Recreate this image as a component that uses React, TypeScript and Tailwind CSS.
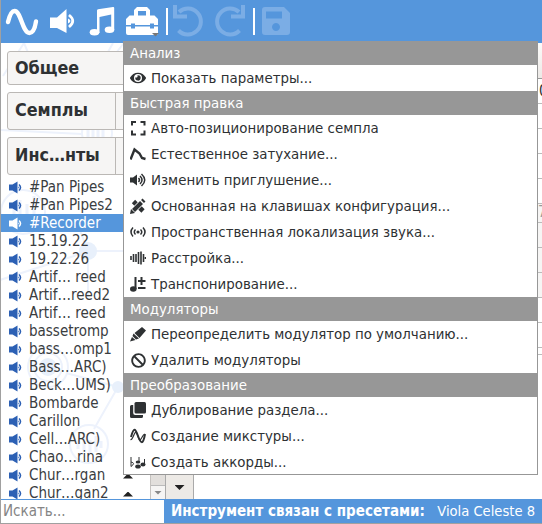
import React from "react";
import { FaBan, FaEye } from "react-icons/fa";

const ui = "font-['DejaVu_Sans_Condensed','DejaVu_Sans',sans-serif] [font-stretch:condensed]";

function Speaker({ className }: { className: string }) {
  return (
    <svg viewBox="0 0 26 26" className={className} fill="currentColor">
      <path d="M0 7h7L17 1v24L7 19H0z" />
      <path d="M18.500 10.500q3.500 2.500 0 5z" />
      <path d="M20 7q6 6 0 12" fill="none" stroke="currentColor" strokeWidth="3" />
    </svg>
  );
}

function Toolbar() {
  return (
    <header className="h-[43px] shrink-0 bg-[#5596dc]">
      <svg width="541" height="43" viewBox="1 0 541 43" fill="none" stroke="#fff">
        <path d="M8 22C10 14 12 11 14.500 11C21 11 22.500 33 29.500 33C33 33 35 28 36 21.500" strokeWidth="4.400" strokeLinecap="round" />
        <g fill="#fff" stroke="none">
          <path d="M50 17.500h7L66.500 9v24L57 28h-7z" />
          <path d="M68 18.500q5 2.500 0 5z" />
          <path d="M97 10.500q0-1 1-1.200L113 7q1.200-.2 1.200 1v22h-3V14.500L99.500 17v16h-2.500z" />
          <ellipse cx="94.500" cy="32.200" rx="4.800" ry="3.300" />
          <ellipse cx="109.500" cy="29.800" rx="4.800" ry="3.300" />
          <path fillRule="evenodd" d="M126 25v-6l3.500-3.500H134V10l3-3h10l3 3v5.500h4.500L158 19v6h-4v-1.500h-4V25h-15v-1.500h-4V25zM138 11v4.500h8V11z" />
          <path d="M126 26.500h5v2h4v-2h15v2h4v-2h4V33q0 2-2 2h-28q-2 0-2-2z" />
        </g>
        <path d="M69 15q7.500 6 0 12" strokeWidth="2.800" />
        <path d="M152 33h7l-3.500 3.500z" fill="#777" stroke="none" />
        <path d="M167 8v27M254 8v27" strokeWidth="2" />
        <g stroke="#7bade5" strokeWidth="4">
          <path d="M175 5v11.500h12M179 12a13 13 0 1 1-.5 18.500" />
          <path d="M243 5v11.500h-12M239 12a13 13 0 1 0 .5 18.500" />
        </g>
        <path fillRule="evenodd" d="M265 7h19l6 6v19q0 3-3 3h-22q-3 0-3-3V10q0-3 3-3zM266 11.500v7h16v-7zM276 23a4 4 0 1 0 .01 0z" fill="#7bade5" stroke="none" />
      </svg>
    </header>
  );
}

function Watermark() {
  return (
    <svg className="absolute left-[-1px] top-0" width="165" height="456" viewBox="0 43 165 456" fill="none" stroke="#edf2fc" strokeWidth="2">
      <path d="M24 43L3 76M24 43l16 38M113 43l-5 9M124 43l-8 10M0 130l82 4M0 280l80-26M88 251h40M74 215l14 36v46M66 373l52 14-24 42" />
      <circle cx="97" cy="133" r="15" />
      <path d="M88 127v12M93 123v20M98 123v20M103 127v12" strokeWidth="3" />
      <circle cx="23" cy="212" r="22" />
      <path d="M14 208v11M20 200v19M27 204v15M34 196v23" strokeWidth="3" />
      <circle cx="48" cy="367" r="20" />
      <circle cx="48" cy="367" r="14" />
      <circle cx="89" cy="444" r="19" />
      <path d="M78 440v9M84 436v16M90 440v13M96 436v16M101 441v7" strokeWidth="3" />
      <g fill="#e8f0fb" stroke="none">
        <circle cx="88" cy="251" r="9" />
        <circle cx="118" cy="387" r="6" />
        <circle cx="48" cy="367" r="9" />
      </g>
    </svg>
  );
}

function Section({ title, tall, split }: { title: string; tall?: boolean; split?: boolean }) {
  return (
    <div className={`${tall ? "h-[38px]" : "h-[34px]"} flex shrink-0 rounded-[3px] border border-[#bbb8b5] bg-[#f6f5f4]`}>
      <span className={`w-[108px] pl-[7px] text-[17.800px] font-bold leading-[32px] text-[#2e3133] ${tall ? "pt-px" : ""} ${split ? "border-r border-[#bbb8b5]" : ""}`}>{title}</span>
    </div>
  );
}

const instruments = ["#Pan Pipes", "#Pan Pipes2", "#Recorder", "15.19.22", "19.22.26", "Artif… reed", "Artif…reed2", "Artif… reed", "bassetromp", "bass…omp1", "Bass…ARC)", "Beck…UMS)", "Bombarde", "Carillon", "Cell…ARC)", "Chao…rina", "Chur…rgan", "Chur…gan2"];

function Sidebar() {
  return (
    <aside className="relative flex w-[149px] shrink-0 flex-col overflow-hidden">
      <Watermark />
      <div className="relative flex flex-col gap-[7px] pl-[6px] pt-[8px]">
        <Section title="Общее" />
        <Section title="Семплы" tall split />
        <Section title="Инс…нты" tall split />
      </div>
      <ul className="relative mt-[3px]">
        {instruments.map((name, i) => (
          <li key={i} className={`flex h-[18px] items-center pl-[8px] text-[15px] leading-[18px] ${i === 2 ? "bg-[#5596dc] text-white" : "text-[#3a3d3f]"}`}>
            <Speaker className={`mr-[7px] size-[13px] ${i === 2 ? "text-white" : "text-[#2c60b4]"}`} />
            <span className="-mt-px whitespace-pre">{name}</span>
            {i > 15 && <i className="absolute left-[122px] mt-[2px] h-[5px] w-[10px] bg-[#222] [clip-path:polygon(50%_0,100%_100%,0_100%)]" />}
          </li>
        ))}
      </ul>
    </aside>
  );
}

const icons: Record<string, React.ReactNode> = {
  frame: <path d="M2 5.500V2h4M10.500 2h4v3.500M14.500 10.500v4h-4M6 14.500H2v-4" fill="none" strokeWidth="2" />,
  decay: <path d="M.5 13.500L4.500 3.500l5 4 2.500 4.500 3.500 1" fill="none" strokeWidth="2.400" />,
  volume: <><path d="M0 5.500h3L7 2.500v11L3 10.500H0z" stroke="none" /><path d="M8.500 6q2 2 0 4M10 4q4 4 0 8M11.500 2q6.500 6 0 12" fill="none" strokeWidth="1.500" /></>,
  tools: <><path d="M3.500 3.500l9.500 9.500" strokeWidth="4.600" /><path d="M2 14L14 2" stroke="#fff" strokeWidth="5.600" /><path d="M3.500 12.500l8-8M12.500 3.500l1.500-1.500" strokeWidth="4.200" /><path d="M0 16l1-5 4 4z" stroke="none" /></>,
  spatial: <><circle cx="8" cy="8" r="1.600" stroke="none" /><path d="M5.500 5.500q-2.500 2.500 0 5M3 3.500q-4 4.500 0 9M10.500 5.500q2.500 2.500 0 5M13 3.500q4 4.500 0 9" fill="none" strokeWidth="1.500" /></>,
  detune: <path d="M1 6v4M3.500 4v8M6 4v8M8.500 2v12M11 1.500v13M13.500 4v8M15.500 7v2" strokeWidth="1.600" />,
  transpose: <><path d="M5.500 1v12M11.500 1v8M8 5h7.500M8 12h7.500" fill="none" strokeWidth="2" /><ellipse cx="3.300" cy="13" rx="3.300" ry="2.700" stroke="none" /></>,
  marker: <path d="M12 1l4 3.500L9.500 12 4.500 7zM3.500 7.500L9 12.500l-3 1-3.500-3.500zM2 11l3.500 3L0 15.500z" stroke="none" />,
  mixture: <><path d="M1 9C4-2 5.500 1 8 8s5 10 7-2" fill="none" strokeWidth="2" /><path d="M.5 11.500c2.500 1 3.500-8 5.500-7s2.500 9 4.500 7 2.500-6 4.500-5" fill="none" strokeWidth="1.200" /></>,
  chords: <><path d="M1 3v9.500q5-3.500 0-4.500M9 8V3M14.500 10V5" fill="none" strokeWidth="1" /><ellipse cx="8" cy="12.500" rx="2.800" ry="2" stroke="none" /><ellipse cx="13" cy="10.500" rx="2.500" ry="2" stroke="none" /><ellipse cx="8" cy="8" rx="2.300" ry="1.600" stroke="none" /></>,
  clone: <><rect x="4.500" y="0" width="11.500" height="11.500" rx="1.500" stroke="none" /><path d="M0 4.500Q0 3 1.500 3h1.700v8q0 2 2 2H13v1.500q0 1.500-1.500 1.500h-10Q0 16 0 14.500z" stroke="none" /></>,
};

function MenuIcon({ name }: { name: string }) {
  if (name === "eye") return <FaEye className="size-[16px]" />;
  if (name === "ban") return <FaBan className="size-[15px]" />;
  return <svg viewBox="0 0 16 16" className="size-[16px]" fill="currentColor" stroke="currentColor">{icons[name]}</svg>;
}

const groups: { title: string; items: [string, string][] }[] = [
  { title: "Анализ", items: [["eye", "Показать параметры..."]] },
  { title: "Быстрая правка", items: [["frame", "Авто-позиционирование семпла"], ["decay", "Естественное затухание..."], ["volume", "Изменить приглушение..."], ["tools", "Основанная на клавишах конфигурация..."], ["spatial", "Пространственная локализация звука..."], ["detune", "Расстройка..."], ["transpose", "Транспонирование..."]] },
  { title: "Модуляторы", items: [["marker", "Переопределить модулятор по умолчанию..."], ["ban", "Удалить модуляторы"]] },
  { title: "Преобразование", items: [["clone", "Дублирование раздела..."], ["mixture", "Создание микстуры..."], ["chords", "Создать аккорды..."]] },
];

function Menu() {
  return (
    <div className="absolute left-[122px] top-[41px] h-[434px] w-[415px] overflow-hidden border border-[#979797] bg-white text-[14.860px] text-[#2e3133]">
      <div className="-mt-px">
        {groups.map((g) => (
          <section key={g.title}>
            <h3 className="h-[24px] bg-[#979797] pl-[6px] leading-[24px] text-white">{g.title}</h3>
            {g.items.map(([icon, label]) => (
              <div key={label} className="flex h-[26px] items-center pl-[6px]">
                <span className="mr-[5px] flex w-[16px] justify-center"><MenuIcon name={icon} /></span>
                <span className="whitespace-nowrap">{label}</span>
              </div>
            ))}
          </section>
        ))}
      </div>
    </div>
  );
}

const cells = ["h-[25px]", "h-[25px]", "h-[25px]", "h-[25px]", "h-[25px]", "h-[19px] bg-[#f6f5f4]", "h-[25px] bg-[#f6f5f4]", "h-[25px] bg-[#f6f5f4]", "h-[25px] bg-[#f6f5f4]", "h-[25px]", "h-[25px]", "h-[7px]"];

function Grid() {
  return (
    <div className="ml-auto flex w-[4px] flex-col overflow-hidden text-[15px] text-[#2e3436]">
      <div className="h-[36px] border-b border-[#999] bg-linear-to-b from-[#fcfbfa] to-[#ece9e6]" />
      {cells.map((c, i) => (
        <div key={i} className={`${c} shrink-0 overflow-hidden border-b border-[#bbb] pl-px leading-[25px]`}>{i === 0 ? "0" : i === 5 ? <span className="-ml-px block leading-[17px] text-[#999]">7</span> : null}</div>
      ))}
    </div>
  );
}

export default function App() {
  return (
    <div className={`${ui} relative flex h-[524px] w-[542px] flex-col overflow-hidden border-b border-l border-[#a0a0a0] bg-white`}>
      <Toolbar />
      <main className="flex h-[456px] shrink-0">
        <Sidebar />
        <div className="flex w-[15px] flex-col border-l border-[#c5c2bf] bg-[#e2dfdc]">
          <div className="h-[443px] border-b border-[#bbb]" />
          <div className="flex h-[13px] items-center justify-center bg-[#f6f5f4]"><i className="h-[4px] w-[8px] bg-[#888] [clip-path:polygon(0_0,100%_0,50%_100%)]" /></div>
        </div>
        <div className="flex w-[29px] items-end justify-center border-x border-[#aaa] bg-[#edeae6] pb-[9px]"><i className="h-[5px] w-[10px] bg-[#222] [clip-path:polygon(0_0,100%_0,50%_100%)]" /></div>
        <Grid />
      </main>
      <footer className="flex h-[24px] shrink-0 text-[15px] leading-[23px]">
        <div className="w-[163px] border-t border-[#5596dc] pl-[2px] text-[#858585]">Искать...</div>
        <div className="flex flex-1 justify-between bg-[#5596dc] pl-[7px] pr-[7px] leading-[24px] text-white">
          <b className="whitespace-nowrap">Инструмент связан с пресетами:</b>
          <span className="whitespace-nowrap text-[14.600px]">Viola Celeste 8</span>
        </div>
      </footer>
      <Menu />
    </div>
  );
}
